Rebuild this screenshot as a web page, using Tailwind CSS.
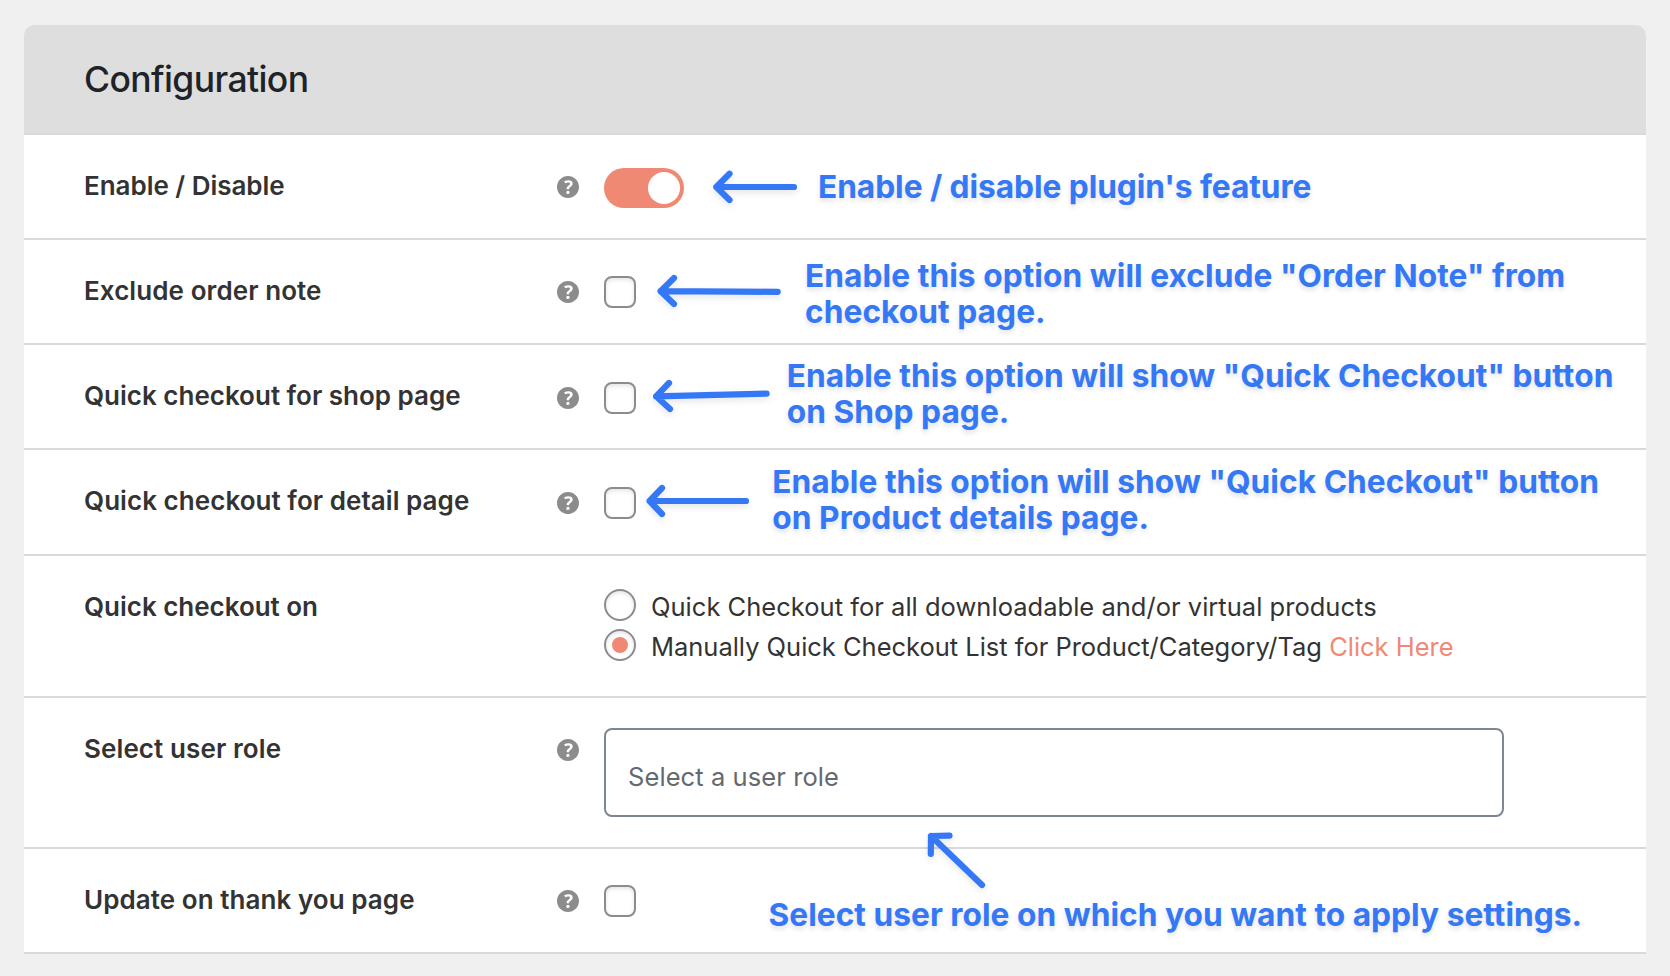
<!DOCTYPE html>
<html lang="en">
<head>
<meta charset="utf-8">
<title>Configuration</title>
<script src="https://cdn.jsdelivr.net/npm/@tailwindcss/browser@4"></script>
</head>
<body class="h-[976px] overflow-hidden bg-[#f0f0f0] pt-[25px] pr-6 pl-6 font-['Inter',sans-serif] text-[25.5px] leading-9 text-[#333]">

<!-- Shared shapes -->
<svg class="hidden">
  <symbol id="help" viewBox="3 3 14 14">
    <path fill="#8c8c8c" d="M17 10c0-3.87-3.14-7-7-7-3.87 0-7 3.13-7 7s3.13 7 7 7c3.86 0 7-3.13 7-7zm-6.3 1.48H9.14v-.43c0-.38.08-.7.24-.98s.46-.57.88-.89c.41-.29.68-.53.81-.71.14-.18.2-.39.2-.62 0-.25-.09-.44-.28-.58-.19-.13-.45-.19-.79-.19-.58 0-1.25.19-2 .57l-.64-1.28c.87-.49 1.8-.74 2.77-.74.81 0 1.45.2 1.92.58.48.39.71.91.71 1.55 0 .43-.09.8-.29 1.11-.19.32-.57.67-1.11 1.06-.38.28-.61.49-.71.63-.1.15-.15.34-.15.57v.35zm-1.47 2.74c-.18-.17-.27-.42-.27-.73 0-.33.08-.58.26-.75s.43-.25.77-.25c.32 0 .57.09.75.26s.27.42.27.74c0 .3-.09.55-.27.72-.18.18-.43.27-.75.27-.33 0-.58-.09-.76-.26z"/>
  </symbol>
</svg>

<main class="w-[1622px] bg-white rounded-t-[10px]">
  <header class="flex h-[110px] items-start rounded-t-[10px] border-b-2 border-[#d9d9d9] bg-[#dedede] pt-[33px] pl-[60px]">
    <h1 class="text-[35.5px] leading-[44px] font-medium tracking-[-0.6px] text-[#1d2327]">Configuration</h1>
  </header>

  <section class="flex h-[105px] items-start border-b-2 border-[#d9d9d9] pt-8 pl-[60px]">
    <h2 class="mt-px w-[473px] shrink-0 text-[26px] font-semibold tracking-[-0.03px]">Enable / Disable</h2>
    <svg class="mt-[9px] mr-[25px] size-[22px] shrink-0"><use href="#help"/></svg>
    <span class="mt-px flex h-10 w-20 shrink-0 justify-end rounded-full bg-[#f08974] p-1"><span class="size-8 rounded-full bg-white"></span></span>
    <svg class="ml-[26px] h-10 w-[90px] shrink-0 overflow-visible drop-shadow-[0_3px_3px_rgba(0,0,0,0.1)]" fill="none" stroke="#3478f6" stroke-width="6.2" stroke-linecap="round" stroke-linejoin="round"><path d="M84 20H6.3M19.5 6.8L6.3 20L19.5 33"/></svg>
    <p class="mt-0.5 ml-[18px] text-[31.7px] leading-9 font-bold tracking-[-0.06px] whitespace-nowrap text-[#3478f6] [text-shadow:0_3px_5px_rgba(0,0,0,0.12)]">Enable / disable plugin's feature</p>
  </section>

  <section class="flex h-[105px] items-start border-b-2 border-[#d9d9d9] pt-8 pl-[60px]">
    <h2 class="mt-px w-[473px] shrink-0 text-[26px] font-semibold tracking-[0.08px]">Exclude order note</h2>
    <svg class="mt-[9px] mr-[25px] size-[22px] shrink-0"><use href="#help"/></svg>
    <span class="mt-1 size-8 shrink-0 rounded-lg border-2 border-[#8c8b92] bg-white shadow-[inset_0_2px_4px_rgba(0,0,0,0.1)]"></span>
    <svg class="ml-[19px] h-10 w-[130px] shrink-0 overflow-visible drop-shadow-[0_3px_3px_rgba(0,0,0,0.1)]" fill="none" stroke="#3478f6" stroke-width="6.2" stroke-linecap="round" stroke-linejoin="round"><path d="M122.7 19.8L5.6 19.2M19 6L5.6 19.2L19 32"/></svg>
    <p class="-mt-[14px] ml-[20px] text-[31.7px] leading-9 font-bold tracking-[0.05px] whitespace-nowrap text-[#3478f6] [text-shadow:0_3px_5px_rgba(0,0,0,0.12)]">Enable this option will exclude "Order Note" from<br>checkout page.</p>
  </section>

  <section class="flex h-[105px] items-start border-b-2 border-[#d9d9d9] pt-8 pl-[60px]">
    <h2 class="mt-px w-[473px] shrink-0 text-[26px] font-semibold">Quick checkout for shop page</h2>
    <svg class="mt-[10px] mr-[25px] size-[22px] shrink-0"><use href="#help"/></svg>
    <span class="mt-[5px] size-8 shrink-0 rounded-lg border-2 border-[#8c8b92] bg-white shadow-[inset_0_2px_4px_rgba(0,0,0,0.1)]"></span>
    <svg class="ml-[14px] h-10 w-[125px] shrink-0 overflow-visible drop-shadow-[0_3px_3px_rgba(0,0,0,0.1)]" fill="none" stroke="#3478f6" stroke-width="6.2" stroke-linecap="round" stroke-linejoin="round"><path d="M116.6 16.6L6.1 19.3M19 6L6.1 19.3L20 32"/></svg>
    <p class="-mt-[19px] ml-[11.7px] text-[31.7px] leading-9 font-bold tracking-[0.04px] whitespace-nowrap text-[#3478f6] [text-shadow:0_3px_5px_rgba(0,0,0,0.12)]">Enable this option will show "Quick Checkout" button<br>on Shop page.</p>
  </section>

  <section class="flex h-[106px] items-start border-b-2 border-[#d9d9d9] pt-8 pl-[60px]">
    <h2 class="mt-px w-[473px] shrink-0 text-[26px] font-semibold tracking-[0.05px]">Quick checkout for detail page</h2>
    <svg class="mt-[10px] mr-[25px] size-[22px] shrink-0"><use href="#help"/></svg>
    <span class="mt-[5px] size-8 shrink-0 rounded-lg border-2 border-[#8c8b92] bg-white shadow-[inset_0_2px_4px_rgba(0,0,0,0.1)]"></span>
    <svg class="ml-2 h-10 w-[110px] shrink-0 overflow-visible drop-shadow-[0_3px_3px_rgba(0,0,0,0.1)]" fill="none" stroke="#3478f6" stroke-width="6.2" stroke-linecap="round" stroke-linejoin="round"><path d="M102 19H5.6M18 6L5.6 19L18 32"/></svg>
    <p class="-mt-[18px] ml-[18.3px] text-[31.7px] leading-9 font-bold tracking-[0.04px] whitespace-nowrap text-[#3478f6] [text-shadow:0_3px_5px_rgba(0,0,0,0.12)]">Enable this option will show "Quick Checkout" button<br>on Product details page.</p>
  </section>

  <section class="flex h-[142px] items-start border-b-2 border-[#d9d9d9] pt-8 pl-[60px]">
    <h2 class="mt-px w-[520px] shrink-0 text-[26px] font-semibold tracking-[-0.02px]">Quick checkout on</h2>
    <div class="mt-px flex flex-col gap-1 tracking-[0.02px] whitespace-nowrap">
      <label class="flex items-start gap-[15px]">
        <span class="size-8 shrink-0 rounded-full border-2 border-[#8c8b92] bg-white shadow-[inset_0_2px_4px_rgba(0,0,0,0.1)]"></span>
        <span>Quick Checkout for all downloadable and/or virtual products</span>
      </label>
      <label class="flex items-start gap-[15px]">
        <span class="flex size-8 shrink-0 items-center justify-center rounded-full border-2 border-[#8c8b92] bg-white shadow-[inset_0_2px_4px_rgba(0,0,0,0.1)]"><span class="size-4 rounded-full bg-[#f08974]"></span></span>
        <span class="tracking-[-0.02px]">Manually Quick Checkout List for Product/Category/Tag <a class="text-[#f08974]">Click Here</a></span>
      </label>
    </div>
  </section>

  <section class="flex h-[151px] items-start border-b-2 border-[#d9d9d9] pt-[30px] pl-[60px]">
    <h2 class="mt-[3px] w-[473px] shrink-0 text-[26px] font-semibold tracking-[0.1px]">Select user role</h2>
    <svg class="mt-[11px] mr-[25px] size-[22px] shrink-0"><use href="#help"/></svg>
    <div class="h-[89px] w-[900px] shrink-0 rounded-lg border-2 border-[#7e8791] pt-[29px] pl-[22px] tracking-[0.08px] text-[#646970]">Select a user role</div>
  </section>

  <section class="relative flex h-[105px] items-start border-b-2 border-[#d9d9d9] pt-8 pl-[60px]">
    <h2 class="mt-px w-[473px] shrink-0 text-[26px] font-semibold tracking-[0.06px]">Update on thank you page</h2>
    <svg class="mt-[9px] mr-[25px] size-[22px] shrink-0"><use href="#help"/></svg>
    <span class="mt-1 size-8 shrink-0 rounded-lg border-2 border-[#8c8b92] bg-white shadow-[inset_0_2px_4px_rgba(0,0,0,0.1)]"></span>
    <p class="mt-4 ml-[132.5px] text-[31.7px] leading-9 font-bold tracking-[0.02px] whitespace-nowrap text-[#3478f6] [text-shadow:0_3px_5px_rgba(0,0,0,0.12)]">Select user role on which you want to apply settings.</p>
    <!-- Arrow pointing up at the role field, crossing the divider -->
    <svg class="absolute -top-6 left-[896px] size-[70px] overflow-visible drop-shadow-[0_3px_3px_rgba(0,0,0,0.1)]" fill="none" stroke="#3478f6" stroke-width="6.2" stroke-linecap="round" stroke-linejoin="round"><path d="M62 60L11 11M29.5 10.7L11 11L10.8 29"/></svg>
  </section>
</main>
</body>
</html>
